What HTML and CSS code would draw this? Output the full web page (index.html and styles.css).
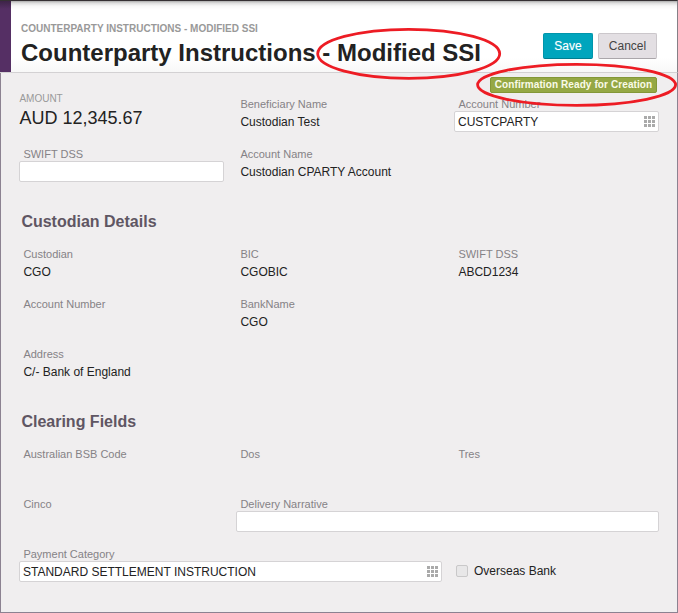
FILE: index.html
```html
<!DOCTYPE html>
<html lang="en">
<head>
<meta charset="utf-8">
<title>Counterparty Instructions</title>
<link rel="stylesheet" href="styles.css">
</head>
<body>
<svg class="sprite" aria-hidden="true"><symbol id="grid" viewBox="0 0 11 11"><path d="M0 0h3v3H0zM4 0h3v3H4zM8 0h3v3H8zM0 4h3v3H0zM4 4h3v3H4zM8 4h3v3H8zM0 8h3v3H0zM4 8h3v3H4zM8 8h3v3H8z"/></symbol></svg>
<div class="page">
  <header class="header">
    <div class="accent"></div>
    <div class="heading">
      <div class="crumb">COUNTERPARTY INSTRUCTIONS - MODIFIED SSI</div>
      <h1 class="title">Counterparty Instructions - Modified SSI</h1>
    </div>
    <div class="actions">
      <button class="btn primary">Save</button>
      <button class="btn">Cancel</button>
    </div>
  </header>
  <main class="content">
    <div class="status"><span class="badge">Confirmation Ready for Creation</span></div>
    <section class="fields">
      <div class="amount"><div class="amount-label">AMOUNT</div><div class="amount-value">AUD 12,345.67</div></div>
      <div class="field"><div class="label">Beneficiary Name</div><div class="value">Custodian Test</div></div>
      <div class="field last"><div class="label">Account Number</div><div class="value input">CUSTCPARTY<svg class="picker"><use href="#grid"/></svg></div></div>
      <div class="field"><div class="label">SWIFT DSS</div><div class="value input"></div></div>
      <div class="field"><div class="label">Account Name</div><div class="value">Custodian CPARTY Account</div></div>
    </section>
    <h2 class="section">Custodian Details</h2>
    <section class="fields">
      <div class="field"><div class="label">Custodian</div><div class="value">CGO</div></div>
      <div class="field"><div class="label">BIC</div><div class="value">CGOBIC</div></div>
      <div class="field last"><div class="label">SWIFT DSS</div><div class="value">ABCD1234</div></div>
      <div class="field"><div class="label">Account Number</div></div>
      <div class="field wide last"><div class="label">BankName</div><div class="value">CGO</div></div>
      <div class="field"><div class="label">Address</div><div class="value">C/- Bank of England</div></div>
    </section>
    <h2 class="section">Clearing Fields</h2>
    <section class="fields">
      <div class="field"><div class="label">Australian BSB Code</div></div>
      <div class="field"><div class="label">Dos</div></div>
      <div class="field last"><div class="label">Tres</div></div>
      <div class="field"><div class="label">Cinco</div></div>
      <div class="field wide last"><div class="label">Delivery Narrative</div><div class="value input"></div></div>
      <div class="field wide"><div class="label">Payment Category</div><div class="value input">STANDARD SETTLEMENT INSTRUCTION<svg class="picker"><use href="#grid"/></svg></div></div>
      <div class="check"><span class="box"></span>Overseas Bank</div>
    </section>
  </main>
  <svg class="marks" viewBox="0 0 678 613" aria-hidden="true">
    <ellipse cx="408.7" cy="53.8" rx="91" ry="24.5"/>
    <ellipse cx="576.6" cy="84.8" rx="99" ry="20.5"/>
  </svg>
</div>
</body>
</html>
```
FILE: styles.css
```css
* { box-sizing: border-box; }
body { margin: 0; font-family: "Liberation Sans", Arial, sans-serif; color: #222; }
.sprite { display: none; }
.page {
  position: relative;
  display: flex;
  flex-direction: column;
  width: 678px;
  height: 613px;
  overflow: hidden;
  background: #f0eeef;
}
.header {
  display: flex;
  height: 73px;
  border-top: 1px solid #353033;
  border-bottom: 1px solid #d3d1d3;
  background: linear-gradient(#aaa 0, #ddd 2px, #f7f7f7 5px, #fff 9px, #fff 56px, #f8f8f8 100%);
  border-right: 1px solid #858087;
}
.accent { width: 11px; background: linear-gradient(#3d2347, #552f64 8px); }
.heading { flex: 1; padding: 21px 0 0 10px; white-space: nowrap; }
.crumb { font-size: 10px; line-height: 14px; font-weight: bold; color: #999; }
.title { margin: 3px 0 0; font-size: 24px; line-height: 28px; }
.actions { display: flex; gap: 5px; padding: 32px 20px 0 0; }
.btn {
  width: 59px;
  height: 26px;
  padding: 0 0 1px;
  font: 12px "Liberation Sans", Arial, sans-serif;
  color: #444;
  background: #e3dfe3;
  border: 1px solid #cbc7cb;
  border-bottom-color: #aaa6aa;
  border-radius: 2px;
}
.btn.primary {
  width: 50px;
  color: #fff;
  background: #00a5bd;
  border-color: #0095ab;
  border-bottom-color: #007d90;
  text-shadow: 0 0 1px rgba(255, 255, 255, 0.4);
}
.content {
  flex: 1;
  padding: 4px 18px 0;
  border: 1px solid #8c8291;
  border-top: 0;
}
.status { display: flex; justify-content: flex-end; height: 20px; padding-right: 2px; }
.badge {
  width: 167px;
  height: 16px;
  font-size: 10px;
  line-height: 14px;
  font-weight: bold;
  letter-spacing: 0.1px;
  text-align: center;
  white-space: nowrap;
  color: #fafbe9;
  background: #95a844;
  border: 1px solid #839737;
  border-radius: 2px;
}
.fields {
  display: grid;
  grid-template-columns: 217px 218px 205px;
  grid-auto-rows: 50px;
}
.field { padding-right: 12px; }
.field:nth-child(3n + 2) { padding-right: 13px; }
.field.last { padding-right: 0; }
.field.wide { grid-column: span 2; }
.label { padding-left: 4.4px; font-size: 11px; line-height: 14px; color: #858286; }
.value { height: 21px; padding: 1px 0 0 4.4px; font-size: 12px; line-height: 21px; white-space: nowrap; }
.input {
  display: flex;
  justify-content: space-between;
  align-items: center;
  padding: 0 3px;
  line-height: 20px;
  background: #fff;
  border: 1px solid #d5d3d5;
  border-radius: 2px;
}
.picker { width: 11px; height: 11px; fill: #aaa; }
.amount { margin-top: -5px; }
.amount-label { font-size: 10px; line-height: 14px; color: #999; padding-left: 0.4px; }
.amount-value { font-size: 18px; line-height: 22px; margin-top: 1px; padding-left: 0.4px; }
.section { margin: 0; padding-left: 2.4px; font-size: 16px; line-height: 49px; height: 50px; color: #5f5663; }
.check { display: flex; align-items: center; height: 24px; margin-top: 12px; padding-left: 2px; font-size: 12px; }
.box {
  width: 12px;
  height: 12px;
  margin-right: 6px;
  background: #e8e7e8;
  border: 1px solid #c9c8c9;
  border-radius: 2px;
}
.marks { position: absolute; inset: 0; width: 678px; height: 613px; fill: none; stroke: #ed1c24; stroke-width: 2.8; }
```
